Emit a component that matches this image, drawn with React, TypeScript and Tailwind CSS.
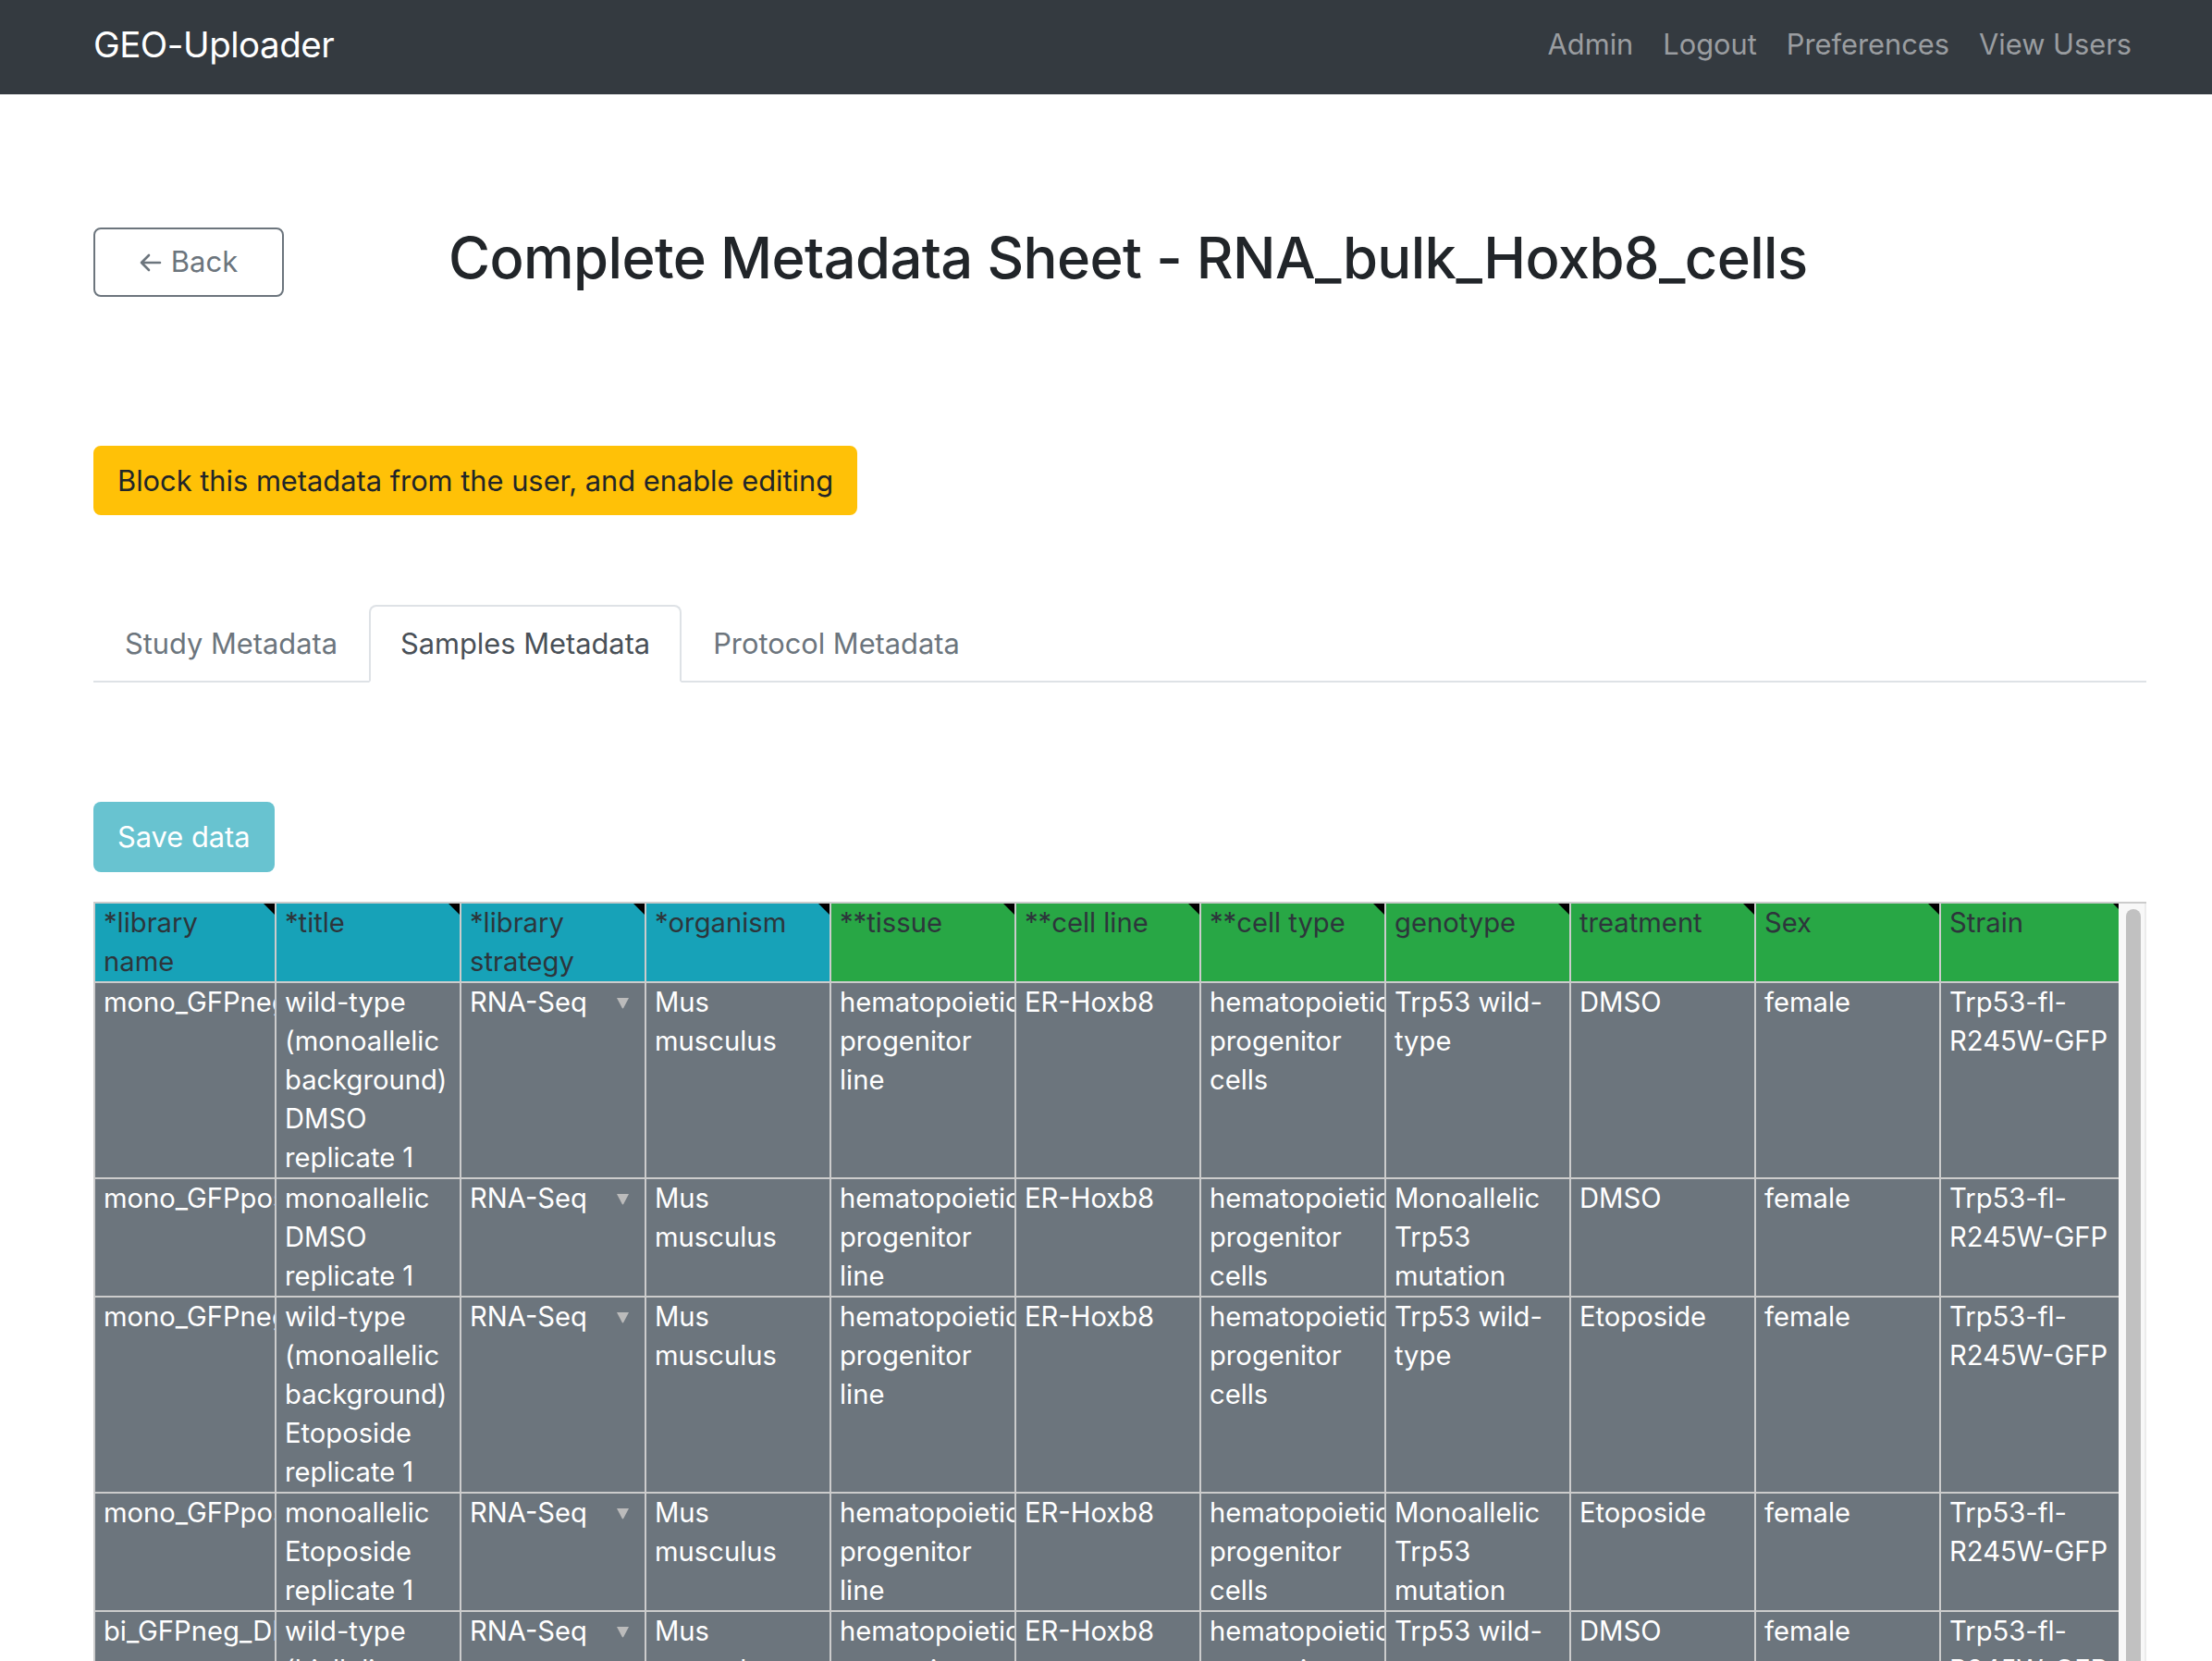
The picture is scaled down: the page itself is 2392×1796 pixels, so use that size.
import React from "react"

type Col = { head: string[]; color: "blue" | "green" }

const columns: Col[] = [
  { head: ["*library", "name"], color: "blue" },
  { head: ["*title"], color: "blue" },
  { head: ["*library", "strategy"], color: "blue" },
  { head: ["*organism"], color: "blue" },
  { head: ["**tissue"], color: "green" },
  { head: ["**cell line"], color: "green" },
  { head: ["**cell type"], color: "green" },
  { head: ["genotype"], color: "green" },
  { head: ["treatment"], color: "green" },
  { head: ["Sex"], color: "green" },
  { head: ["Strain"], color: "green" },
]

const wt = (bg: string, treat: string) => ["wild-type", `(${bg}`, "background)", treat, "replicate 1"]

const rows: { lines: number; cells: string[][] }[] = [
  {
    lines: 5,
    cells: [
      ["mono_GFPneg_DMSO_rep1"],
      wt("monoallelic", "DMSO"),
      ["RNA-Seq"],
      ["Mus", "musculus"],
      ["hematopoietic", "progenitor", "line"],
      ["ER-Hoxb8"],
      ["hematopoietic", "progenitor", "cells"],
      ["Trp53 wild-", "type"],
      ["DMSO"],
      ["female"],
      ["Trp53-fl-", "R245W-GFP"],
    ],
  },
  {
    lines: 3,
    cells: [
      ["mono_GFPpos_DMSO_rep1"],
      ["monoallelic", "DMSO", "replicate 1"],
      ["RNA-Seq"],
      ["Mus", "musculus"],
      ["hematopoietic", "progenitor", "line"],
      ["ER-Hoxb8"],
      ["hematopoietic", "progenitor", "cells"],
      ["Monoallelic", "Trp53", "mutation"],
      ["DMSO"],
      ["female"],
      ["Trp53-fl-", "R245W-GFP"],
    ],
  },
  {
    lines: 5,
    cells: [
      ["mono_GFPneg_Etoposide_rep1"],
      wt("monoallelic", "Etoposide"),
      ["RNA-Seq"],
      ["Mus", "musculus"],
      ["hematopoietic", "progenitor", "line"],
      ["ER-Hoxb8"],
      ["hematopoietic", "progenitor", "cells"],
      ["Trp53 wild-", "type"],
      ["Etoposide"],
      ["female"],
      ["Trp53-fl-", "R245W-GFP"],
    ],
  },
  {
    lines: 3,
    cells: [
      ["mono_GFPpos_Etoposide_rep1"],
      ["monoallelic", "Etoposide", "replicate 1"],
      ["RNA-Seq"],
      ["Mus", "musculus"],
      ["hematopoietic", "progenitor", "line"],
      ["ER-Hoxb8"],
      ["hematopoietic", "progenitor", "cells"],
      ["Monoallelic", "Trp53", "mutation"],
      ["Etoposide"],
      ["female"],
      ["Trp53-fl-", "R245W-GFP"],
    ],
  },
  {
    lines: 5,
    cells: [
      ["bi_GFPneg_DMSO_rep1"],
      wt("biallelic", "DMSO"),
      ["RNA-Seq"],
      ["Mus", "musculus"],
      ["hematopoietic", "progenitor", "line"],
      ["ER-Hoxb8"],
      ["hematopoietic", "progenitor", "cells"],
      ["Trp53 wild-", "type"],
      ["DMSO"],
      ["female"],
      ["Trp53-fl-", "R245W-GFP"],
    ],
  },
]

function Navbar() {
  return (
    <nav className="flex h-[102px] items-center justify-between bg-[#343a40] pb-[6px] pl-[101px] pr-[71px]">
      <span className="text-[38.5px] leading-none tracking-[-0.5px] text-white">GEO-Uploader</span>
      <div className="flex text-[30.8px] text-[#9a9da0]">
        {["Admin", "Logout", "Preferences", "View Users"].map((l) => (
          <a key={l} className="px-[16px]">
            {l}
          </a>
        ))}
      </div>
    </nav>
  )
}

function Tabs() {
  return (
    <div className="mt-[97px] flex border-b-2 border-[#dee2e6] text-[30.8px]">
      <div className="-mb-[2px] border-2 border-transparent px-[32px] py-[16px] leading-[48px] text-[#6c757d]">
        Study Metadata
      </div>
      <div className="-mb-[2px] rounded-t-[8px] border-2 border-[#dee2e6] border-b-white bg-white px-[32px] py-[16px] leading-[48px] text-[#495057]">
        Samples Metadata
      </div>
      <div className="-mb-[2px] border-2 border-transparent px-[32px] py-[16px] leading-[48px] text-[#6c757d]">
        Protocol Metadata
      </div>
    </div>
  )
}

function Corner() {
  return (
    <span className="absolute right-0 top-0 h-0 w-0 border-l-[12px] border-t-[12px] border-l-transparent border-t-black" />
  )
}

function Sheet() {
  return (
    <div className="mt-[32px] flex h-[900px] overflow-hidden border-t-2 border-[#cccccc]">
      <div className="flex-1 overflow-hidden">
        <div className="w-max border-l-2 border-[#cccccc] text-[29.2px] leading-[42px]">
          <div className="flex">
            {columns.map((c, i) => (
              <div
                key={i}
                className={
                  "relative h-[86px] shrink-0 border-b-2 border-r-2 border-[#cccccc] px-[9px] text-[#2d353b] " +
                  (i === 0 ? "w-[196px] " : "w-[200px] ") +
                  (c.color === "blue" ? "bg-[#17a2b8]" : "bg-[#28a745]")
                }
              >
                {c.head.map((h) => (
                  <div key={h} className="whitespace-nowrap">
                    {h}
                  </div>
                ))}
                <Corner />
              </div>
            ))}
          </div>
          {rows.map((r, ri) => (
            <div key={ri} className="flex">
              {r.cells.map((cell, ci) => (
                <div
                  key={ci}
                  className={
                    "relative shrink-0 overflow-hidden border-b-2 border-r-2 border-[#cccccc] bg-[#6c757d] px-[9px] text-white " +
                    (ci === 0 ? "w-[196px]" : "w-[200px]")
                  }
                  style={{ height: r.lines * 42 + 2 }}
                >
                  {cell.map((line, li) => (
                    <div key={li} className="whitespace-nowrap">
                      {line}
                    </div>
                  ))}
                  {ci === 2 && (
                    <svg className="absolute right-[16px] top-[15px]" width="15" height="13" viewBox="0 0 15 13">
                      <path d="M1 1h13L8.2 12a.8.8 0 0 1-1.4 0z" fill="#bbbbbb" />
                    </svg>
                  )}
                </div>
              ))}
            </div>
          ))}
        </div>
      </div>
      <div className="w-[30px] shrink-0 border-r-2 border-[#ececec] bg-[#f8f8f8] pl-[8px] pt-[6px]">
        <div className="h-[1200px] w-[16px] rounded-full bg-[#c1c1c1]" />
      </div>
    </div>
  )
}

export default function App() {
  return (
    <div className="min-h-screen bg-white font-[family-name:Inter,ui-sans-serif,sans-serif] text-[#212529]">
      <Navbar />
      <main className="pl-[101px] pr-[71px]">
        <div className="mt-[144px] flex items-center">
          <div className="w-[384px] shrink-0">
            <button className="flex h-[75px] w-[206px] items-center justify-center gap-[10px] rounded-[8px] border-2 border-[#6c757d] text-[31px] text-[#6c757d]">
              <svg width="24" height="22" viewBox="0 0 24 22" fill="none" stroke="#6c757d" strokeWidth="2.6" strokeLinecap="round" strokeLinejoin="round">
                <path d="M22 11H2M10 3l-8 8 8 8" />
              </svg>
              Back
            </button>
          </div>
          <h2 className="-mt-[10px] text-[61.5px] font-medium leading-[77px] tracking-[-0.6px] text-[#212529]">
            Complete Metadata Sheet - RNA_bulk_Hoxb8_cells
          </h2>
        </div>

        <button className="mt-[161px] h-[75px] rounded-[8px] border-2 border-[#ffc107] bg-[#ffc107] px-[24px] text-[30.8px] leading-[48px] text-[#212529]">
          Block this metadata from the user, and enable editing
        </button>

        <Tabs />

        <button className="mt-[129px] h-[76px] rounded-[8px] bg-[#68c3d0] px-[26px] text-[30.8px] leading-[48px] text-white">
          Save data
        </button>

        <Sheet />
      </main>
    </div>
  )
}
